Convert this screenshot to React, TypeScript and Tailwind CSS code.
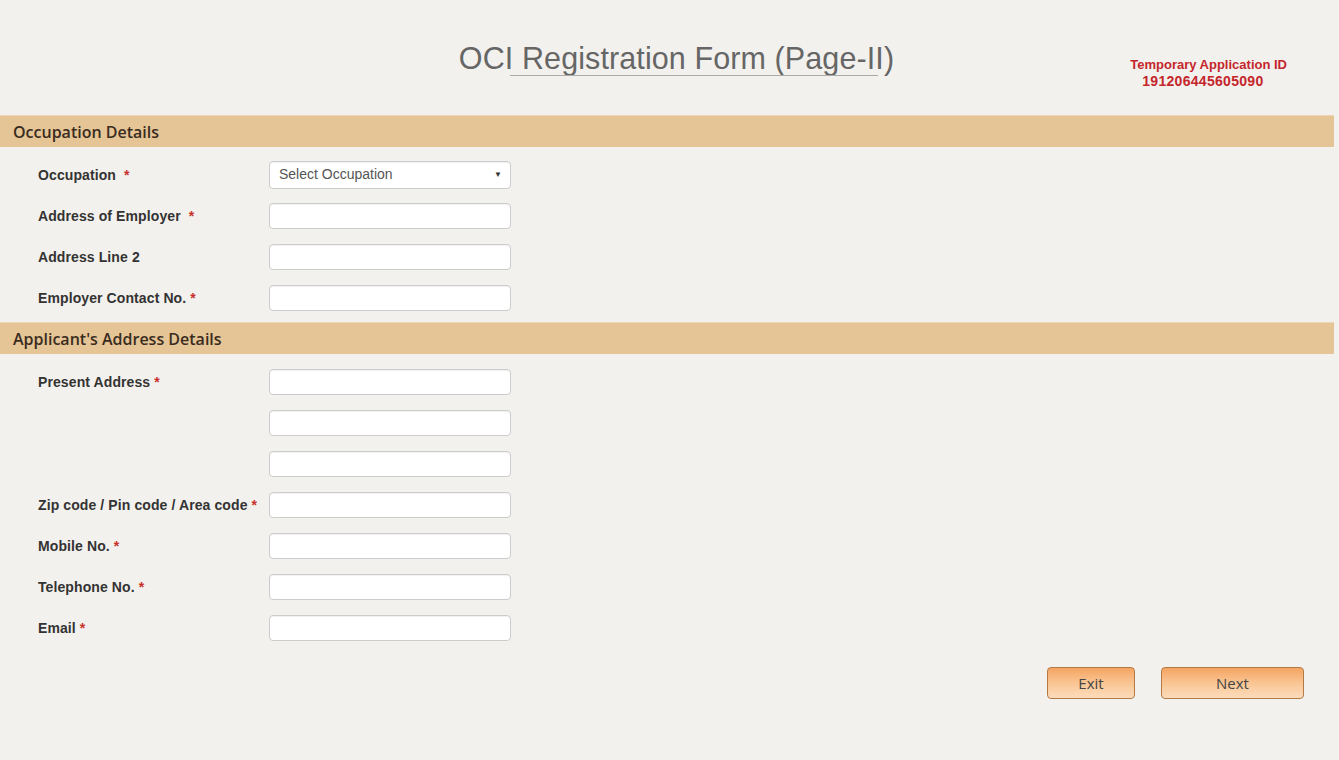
import React from "react";

type Field = { label: string; required?: boolean; wide?: boolean; select?: string };

const occupation: Field[] = [
  { label: "Occupation", required: true, wide: true, select: "Select Occupation" },
  { label: "Address of Employer", required: true, wide: true },
  { label: "Address Line 2" },
  { label: "Employer Contact No.", required: true },
];

const address: Field[] = [
  { label: "Present Address", required: true },
  { label: "" },
  { label: "" },
  { label: "Zip code / Pin code / Area code", required: true },
  { label: "Mobile No.", required: true },
  { label: "Telephone No.", required: true },
  { label: "Email", required: true },
];

function SectionBar({ title }: { title: string }) {
  return (
    <div className="mr-[5px] h-[32px] bg-[#e5c495] border-t border-[#eed6b4] flex items-center pl-[13px]">
      <span className="text-[16px] font-semibold text-[#3a2c1e] font-['Open_Sans',sans-serif]">
        {title}
      </span>
    </div>
  );
}

function Row({ f }: { f: Field }) {
  return (
    <div className="h-[41px] flex items-center pl-[38px]">
      <div className="w-[231px] pt-[2px] text-[14px] font-bold text-[#333] tracking-[0.1px]">
        {f.label}
        {f.required && (
          <span className={`text-[#c9302c] ${f.wide ? "ml-[8px]" : "ml-[4px]"}`}>*</span>
        )}
      </div>
      {f.select ? (
        <div className="w-[242px] h-[28px] bg-white border border-[#ccc] rounded-[4px] flex items-center justify-between pl-[9px] pr-[8px] shadow-[inset_0_1px_1px_rgba(0,0,0,0.06)]">
          <span className="text-[14px] text-[#555]">{f.select}</span>
          <span className="text-[8px] text-[#333]">▼</span>
        </div>
      ) : (
        <div className="w-[242px] h-[26px] bg-white border border-[#ccc] rounded-[4px] shadow-[inset_0_1px_1px_rgba(0,0,0,0.06)]" />
      )}
    </div>
  );
}

function OrangeButton({ label, width }: { label: string; width: string }) {
  return (
    <button
      className={`${width} h-[32px] rounded-[4px] border border-[#b47a45] bg-gradient-to-b from-[#f4a461] via-[#f9c593] to-[#fcdcbc] text-[15px] text-[#444] font-['Open_Sans',sans-serif]`}
    >
      {label}
    </button>
  );
}

export default function App() {
  return (
    <div className="min-h-[760px] w-full bg-[#f3f1ed] font-['Liberation_Sans',Arial,sans-serif]">
      {/* page heading */}
      <div className="h-[115px] grid grid-cols-[1fr_auto_1fr]">
        <div />
        <div className="pt-[39px] pl-[14px]">
          <h1 className="relative text-[30.5px] leading-[38px] text-[#666] tracking-[0.1px]">
            OCI Registration Form (Page-II)
            <span className="absolute left-[51px] right-[16px] top-[36px] h-px bg-[#aaa]" />
          </h1>
        </div>
        <div className="flex justify-end pr-[52px] pt-[56px]">
          <div className="text-[13px] font-bold text-[#c4262c] leading-[17px]">
            <div>Temporary Application ID</div>
            <div className="pl-[12px] text-[14px] tracking-[0.3px]">191206445605090</div>
          </div>
        </div>
      </div>

      <SectionBar title="Occupation Details" />
      <div className="pt-[7px] pb-[4px]">
        {occupation.map((f, i) => (
          <Row key={i} f={f} />
        ))}
      </div>

      <SectionBar title="Applicant's Address Details" />
      <div className="pt-[7px]">
        {address.map((f, i) => (
          <Row key={i} f={f} />
        ))}
      </div>

      <div className="flex justify-end gap-[26px] pr-[35px] pt-[19px]">
        <OrangeButton label="Exit" width="w-[88px]" />
        <OrangeButton label="Next" width="w-[143px]" />
      </div>
    </div>
  );
}
